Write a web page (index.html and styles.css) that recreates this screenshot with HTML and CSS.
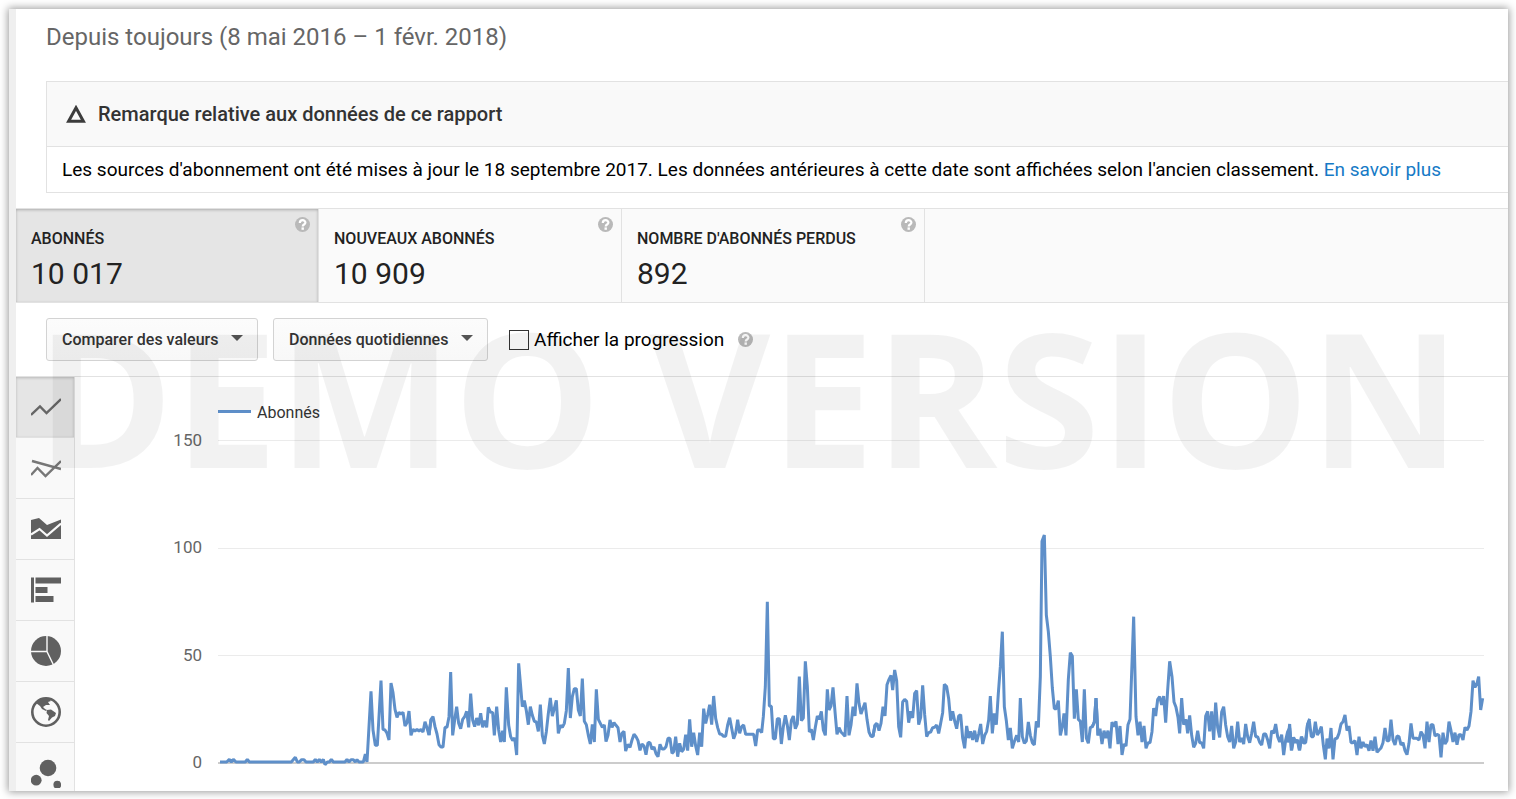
FILE: index.html
```html
<!DOCTYPE html>
<html lang="fr">
<head>
<meta charset="utf-8">
<meta name="viewport" content="width=device-width, initial-scale=1">
<title>Abonnés</title>
<link rel="stylesheet" href="styles.css">
</head>
<body>
<svg class="defs" aria-hidden="true">
  <symbol id="help" viewBox="0 0 15 15">
    <circle cx="7.5" cy="7.5" r="7.5" fill="#b9b9b9"/>
    <path d="M4.800 6C4.800 2.200 10.400 2.400 10.400 5.600 10.400 7.600 7.700 7.400 7.700 9.500" fill="none" stroke="#fff" stroke-width="2.200"/>
    <rect x="6.500" y="10.400" width="2.400" height="2.400" fill="#fff"/>
  </symbol>
  <symbol id="caret" viewBox="0 0 12 6"><path d="M0 0h12L6 6z" fill="#555"/></symbol>
</svg>
<div class="frame">
<main class="report">
  <h1 class="period">Depuis toujours (8 mai 2016 – 1 févr. 2018)</h1>

  <section class="notice">
    <h2 class="notice-title">
      <svg class="notice-icon" viewBox="0 0 20 18" aria-hidden="true"><path d="M10 2.8L17.4 16.2H2.6z" fill="none" stroke="#3c3c3c" stroke-width="3"/></svg>
      Remarque relative aux données de ce rapport
    </h2>
    <p class="notice-text">Les sources d'abonnement ont été mises à jour le 18 septembre 2017. Les données antérieures à cette date sont affichées selon l'ancien classement. <a href="#">En savoir plus</a></p>
  </section>

  <nav class="metrics">
    <button class="metric is-active" type="button"><span class="metric-name">ABONNÉS</span><span class="metric-value">10 017</span><svg class="help metric-help"><use href="#help"/></svg></button>
    <button class="metric" type="button"><span class="metric-name">NOUVEAUX ABONNÉS</span><span class="metric-value">10 909</span><svg class="help metric-help"><use href="#help"/></svg></button>
    <button class="metric" type="button"><span class="metric-name">NOMBRE D'ABONNÉS PERDUS</span><span class="metric-value">892</span><svg class="help metric-help"><use href="#help"/></svg></button>
  </nav>

  <div class="toolbar">
    <div class="dropdown"><select aria-label="Comparer des valeurs"><option>Comparer des valeurs</option></select><svg class="caret"><use href="#caret"/></svg></div>
    <div class="dropdown"><select aria-label="Période des données"><option>Données quotidiennes</option></select><svg class="caret"><use href="#caret"/></svg></div>
    <div class="option"><input type="checkbox" id="progress"><label for="progress">Afficher la progression</label><svg class="help option-help"><use href="#help"/></svg></div>
  </div>

  <div class="workspace">
    <nav class="types">
      <button class="type is-active" type="button" aria-label="Courbe"><svg viewBox="0 0 30 30"><path d="M0 23L9 14.500 15.500 21 30 7" fill="none" stroke="#666" stroke-width="2.400"/></svg></button>
      <button class="type" type="button" aria-label="Comparaison"><svg viewBox="0 0 30 30"><path d="M0 22L6.500 15 14.500 23 30 8M1 8L30 16" fill="none" stroke="#777" stroke-width="2.400"/></svg></button>
      <button class="type" type="button" aria-label="Aires"><svg viewBox="0 0 30 30"><path d="M0 6L8 4 16 11 30 5.500V25H0z" fill="#606060"/><path d="M0 20.500L8.500 15 16 21.500 30 9.500" fill="none" stroke="#fafafa" stroke-width="2.200"/></svg></button>
      <button class="type" type="button" aria-label="Barres"><svg viewBox="0 0 30 30"><path d="M0 2.500h3v25H0zM4.500 2.500H30v6H4.500zM4.500 12h12v6h-12zM4.500 21h18v6h-18z" fill="#606060"/></svg></button>
      <button class="type" type="button" aria-label="Secteurs"><svg viewBox="0 0 30 30"><circle cx="15" cy="15" r="15" fill="#606060"/><path d="M16 0V15.500L22.500 29M16 15.500H0" fill="none" stroke="#fafafa" stroke-width="1.400"/></svg></button>
      <button class="type" type="button" aria-label="Carte"><svg viewBox="0 0 30 30"><circle cx="15" cy="15" r="13.700" fill="none" stroke="#606060" stroke-width="2.600"/><path d="M5 6Q10 1 18 2L20 4 17 5 19 8 15 8 12 10 14 12 16 13 15 14 11 12 9 9z" fill="#606060"/><path d="M16 13L20 12.500 25 16 24 19 21 20.500 18 24 17 23 18 19 15.500 16z" fill="#606060"/></svg></button>
      <button class="type" type="button" aria-label="Bulles"><svg viewBox="0 0 30 30"><circle cx="17" cy="10" r="8.300" fill="#606060"/><circle cx="5.200" cy="22.200" r="5.400" fill="#606060"/><circle cx="26.300" cy="26.700" r="3.900" fill="#606060"/></svg></button>
    </nav>

    <svg class="chart" viewBox="0 0 1433 414" role="img" aria-label="Abonnés par jour">
      <path class="grid" d="M143 63.500H1409M143 171.500H1409M143 278.500H1409"/>
      <path class="axis" d="M143 386H1409"/>
      <g class="ticks">
        <text x="127" y="69">150</text>
        <text x="127" y="176">100</text>
        <text x="127" y="284">50</text>
        <text x="127" y="391">0</text>
      </g>
      <path class="key" d="M143 34.500H176"/>
      <text class="key-label" x="182" y="41">Abonnés</text>
      <g class="series">
        <polyline transform="translate(135 263) scale(.33333)" points="30,366 50,366 58,358 64,366 70,358 78,366 106,366 112,358 118,366 244,366 256,352 262,366 268,366 275,359 282,359 288,366 310,366 316,358 322,366 328,358 334,366 340,358 345,374 352,366 358,366 364,358 370,366 405,366 411,358 417,366 423,359 430,359 436,366 441,359 447,366 460,366 466,342 471,366 477,260 483,154 489,270 496,316 502,316 507,230 513,122 519,268 525,270 531,280 537,300 543,129 549,158 555,208 561,232 567,217 573,222 579,217 585,258 591,248 597,213 603,286 609,268 615,273 621,268 627,273 633,268 639,276 645,245 651,264 657,285 663,238"/>
        <polyline transform="translate(355 213) scale(.33333)" points="-3,435 3,388 9,380 15,410 21,432 27,464 33,471 39,471 45,412 51,412 57,380 62,246 68,436 74,390 80,350 86,400 92,416 98,388 104,380 110,364 116,412 122,311 128,390 134,410 140,384 146,406 152,370 158,412 164,392 170,412 175,352 181,366 188,368 193,436 200,350 206,420 212,456 218,422 223,456 229,292 236,405 242,440 248,452 254,444 260,495 266,220 272,290 277,350 283,332 289,362 295,404 301,350 307,376 313,394 319,396 325,424 331,344 337,436 343,462 349,425 355,370 361,324 367,378 373,355 379,331 385,430 391,406 397,412 403,400 409,362 415,234 421,384 427,320 433,296 439,296 445,360 451,378 457,266 463,394 469,404 475,436 481,462 487,403 493,456 499,298 505,388 511,400 517,412 523,405 528,455 534,436 540,390 546,412 552,398 558,406 564,413 570,456 576,430 582,424 587,483 593,463 600,472 606,450 612,433 618,440 624,452 630,481 636,462 642,468 648,494 654,458 660,458"/>
        <polyline transform="translate(575 213) scale(.33333)" points="-6,458 0,458 6,478 12,471 18,491 24,500 30,463 36,477 42,477 48,470 54,445 60,445 66,490 71,485 77,440 83,500 89,460 95,485 101,478 107,434 113,482 119,388 125,470 131,428 137,468 143,495 149,428 155,470 161,356 167,400 173,375 179,344 185,404 191,318 197,385 203,413 209,432 215,433 221,439 227,439 233,405 239,383 245,415 251,446 257,430 263,389 269,430 275,410 281,405 287,433 311,433 317,468 323,420 329,420 335,428 340,380 346,290 352,35 358,348 364,349 370,446 376,446 382,386 388,386 394,462 400,410 406,376 412,406 418,450 424,392 430,378 436,416 442,402 448,260 454,392 460,384 466,214 472,290 478,426 484,418 490,450 496,412 502,378 508,388 514,364 520,420 526,436 532,298 537,360 543,348 549,292 555,365 561,433 567,413 573,426 579,432 585,439 591,318 597,436 603,405 609,350 615,378 621,280 627,340 633,372 639,355 645,338 651,388 657,426 663,439 669,439 675,406 681,400"/>
        <polyline transform="translate(795 213) scale(.33333)" points="3,439 9,439 15,406 21,400 27,422 33,400 39,350 45,378 51,284 57,268 63,256 68,300 74,240 80,272 86,410 92,442 98,336 104,328 110,334 116,398 122,364 128,384 134,310 140,302 146,404 152,382 158,286 164,374 170,440 176,428 182,426 188,413 194,412 200,405 206,430 212,400 218,368 223,283 230,290 236,326 242,392 248,364 254,393 260,416 266,378 272,374 278,444 284,475 290,408 296,444 302,424 308,450 314,422 320,456 326,432 332,402 338,462 344,436 350,424 356,390 361,318 367,430 373,370 379,404 385,310 391,230 397,125 403,350 409,392 415,450 421,414 427,475 434,452 440,436 446,456 451,324 457,440 463,460 469,453 475,396 481,436 487,458 493,465 499,394 505,412 511,260 516,-146 523,-165 529,75 535,125 541,200 547,294 553,356 559,356 565,332 571,436 577,410 582,370 588,436 595,268 601,188 607,198 613,386 619,298 625,388 631,394 637,456 643,298 649,444 655,460 661,412 667,410 673,396 678,324 684,436"/>
        <polyline transform="translate(1015 213) scale(.33333)" points="1,412 7,410 13,396 18,324 24,436 30,416 36,462 42,422 48,444 54,422 60,475 66,396 72,410 78,394 84,462 90,408 96,495 102,462 108,468 114,404 120,388 131,80 138,380 144,436 150,395 156,456 162,408 168,475 174,458 180,458 186,425 191,354 197,378 203,328 209,320 215,345 221,318 227,398 233,300 239,214 246,260 252,336 258,352 264,382 269,430 275,324 281,404 288,388 293,430 299,376 305,436 311,472 317,460 323,422 329,458 335,458 341,475 347,378 353,364 359,424 365,364 371,450 377,338 383,412 389,442 395,366 401,350 407,405 413,440 419,456 425,408 431,475 437,456 443,395 449,456 455,444 461,462 467,402 473,440 479,458 485,430 491,395 497,440 503,440 509,457 515,465 521,432 527,432 533,450 539,475 545,422 551,430 557,402 563,440 569,456 575,434 581,495 587,450 593,425 599,414 605,481 611,443 617,456 623,450 629,481 635,440 641,458 647,458 653,402 659,386"/>
        <polyline transform="translate(1215 263) scale(.33333)" points="-7,308 -1,252 4,331 10,292 16,308 22,300 28,331 34,290 40,308 46,308 52,256 58,242 64,290 70,290 76,245 82,285 88,275 94,260 100,316 106,358 111,296 117,325 123,264 129,358 135,296 141,295 147,280 153,252 159,245 165,225 171,272 177,258 183,308 189,308 195,302 201,345 207,290 213,325 219,306 225,320 231,314 237,332 243,302 249,332 255,290 261,337 267,330 273,324 279,308 285,264 291,302 297,302 303,239 309,300 315,315 321,288 327,290 333,315 339,308 345,332 351,344 357,310 363,250 369,295 381,295 387,300 393,275 399,285 405,325 411,245 417,306 423,254 429,254 435,288 441,283 447,286 453,352 459,278 465,312 471,302 477,245 483,272 489,306 495,278 501,314 507,284 513,284 519,300 525,262 531,270 537,258 543,215 549,122 555,142 561,130 566,110 572,210 578,175"/>
      </g>
    </svg>
  </div>
</main>
</div>
<div class="watermark" aria-hidden="true">DEMO VERSION</div>
</body>
</html>
```
FILE: styles.css
```css
* { box-sizing: border-box; }

body {
  position: relative;
  margin: 0;
  padding: 9px 8px 8px 9px;
  background: #fff;
  color: #000;
  font-family: Roboto, "Liberation Sans", sans-serif;
  font-size: 19px;
  overflow: hidden;
}

button, select, input { font: inherit; color: inherit; }

.defs { display: block; width: 0; height: 0; }

.frame {
  padding-left: 7px;
  background: #efefef;
  box-shadow: 0 0 8px 1px rgba(0, 0, 0, .4);
  height: calc(100vh - 17px);
}

.report {
  display: flex;
  flex-direction: column;
  height: 100%;
  background: #fff;
  overflow: hidden;
}

.period {
  margin: 12px 30px 28px;
  color: #666;
  font-size: 24px;
  font-weight: 400;
  line-height: 32px;
}

.notice {
  margin: 0 0 15px 30px;
  border: 1px solid #e2e2e2;
  border-right: 0;
}

.notice-title {
  display: flex;
  align-items: center;
  gap: 12px;
  margin: 0;
  padding: 0 19px;
  border-bottom: 1px solid #e2e2e2;
  background: #f9f9f9;
  color: #333;
  font-size: 20px;
  font-weight: 500;
  line-height: 64px;
}

.notice-icon { width: 20px; height: 18px; }

.notice-text {
  margin: 0;
  padding: 0 15px;
  line-height: 45px;
  white-space: nowrap;
}

.notice-text a { color: #167ac6; text-decoration: none; }

.metrics {
  display: flex;
  flex: none;
  border: 1px solid #e2e2e2;
  border-width: 1px 0;
  background: #fafafa;
}

.metric {
  position: relative;
  display: flex;
  flex-direction: column;
  gap: 3px;
  width: 303px;
  padding: 18px 15px 8px;
  border: 0;
  border-right: 1px solid #e2e2e2;
  background: none;
  color: #222;
  text-align: left;
}

.metric.is-active {
  background: #e5e5e5;
  box-shadow: inset 0 1px 3px rgba(0, 0, 0, .25);
}

.metric-name { font-size: 16px; font-weight: 500; line-height: 24px; }
.metric-value { font-size: 30px; line-height: 40px; }

.help { width: 15px; height: 15px; }
.metric-help { position: absolute; top: 8px; right: 8px; }

.toolbar {
  display: flex;
  flex: none;
  align-items: center;
  gap: 15px;
  padding: 15px 30px;
  border-bottom: 1px solid #e2e2e2;
}

.dropdown { position: relative; }

.dropdown select {
  appearance: none;
  display: block;
  height: 43px;
  padding: 0 38px 1px 15px;
  border: 1px solid #d3d3d3;
  border-radius: 3px;
  background: linear-gradient(#fcfcfc, #f8f8f8);
  color: #333;
  font-size: 16px;
  font-weight: 500;
}

.caret {
  position: absolute;
  top: 17px;
  right: 15px;
  width: 12px;
  height: 6px;
  pointer-events: none;
}

.option { display: flex; align-items: center; gap: 5px; padding-left: 6px; }

.option input {
  appearance: none;
  width: 20px;
  height: 20px;
  margin: 0;
  border: 1px solid #333;
  background: #fff;
}

.option-help { margin-left: 9px; }

.workspace { display: flex; flex: 1; align-items: flex-start; min-height: 0; }

.types { display: flex; flex: none; flex-direction: column; width: 59px; }

.type {
  display: flex;
  align-items: center;
  height: 61px;
  padding: 0 13px 0 15px;
  border: 0;
  border-right: 1px solid #e2e2e2;
  border-bottom: 1px solid #e2e2e2;
  background: #f9f9f9;
}

.type.is-active {
  background: #e5e5e5;
  box-shadow: inset 0 1px 3px rgba(0, 0, 0, .2);
}

.type svg { width: 30px; height: 30px; }

.chart { flex: 1; min-width: 0; }
.grid { stroke: #ebebeb; }
.axis { stroke: #ccc; stroke-width: 2; }
.ticks { fill: #666; font-size: 17px; text-anchor: end; }
.key { stroke: #5e8fc9; stroke-width: 3; }
.key-label { fill: #333; font-size: 16px; }
.series { fill: none; stroke: #5e8fc9; stroke-width: 9; stroke-linejoin: bevel; }

.watermark {
  position: absolute;
  top: 286px;
  left: 36px;
  color: rgba(0, 0, 0, .05);
  font-family: "Open Sans", sans-serif;
  font-size: 186px;
  font-weight: 700;
  line-height: 220px;
  white-space: nowrap;
  pointer-events: none;
}
```
